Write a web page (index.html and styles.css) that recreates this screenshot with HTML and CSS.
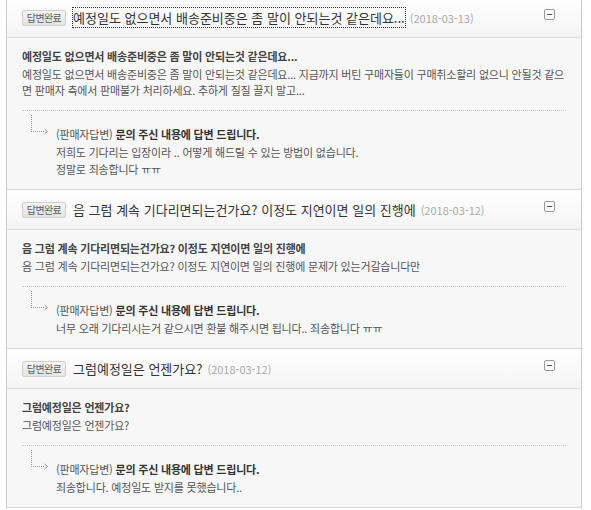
FILE: index.html
```html
<!DOCTYPE html>
<html lang="ko">
<head>
  <meta charset="UTF-8">
  <meta name="viewport" content="width=device-width, initial-scale=1.0">
  <title>상품문의</title>
  <link rel="stylesheet" href="styles.css">
</head>
<body>
  <ul class="qna-list">
    <li class="qna-item">
      <div class="qna-head">
        <span class="badge">답변완료</span>
        <span class="subject focused">예정일도 없으면서 배송준비중은 좀 말이 안되는것 같은데요...</span>
        <span class="date">(2018-03-13)</span>
        <span class="toggle"></span>
      </div>
      <div class="qna-body">
        <p class="q-title">예정일도 없으면서 배송준비중은 좀 말이 안되는것 같은데요...</p>
        <p class="q-text">예정일도 없으면서 배송준비중은 좀 말이 안되는것 같은데요... 지금까지 버틴 구매자들이 구매취소할리 없으니 안될것 같으면 판매자 측에서 판매불가 처리하세요. 추하게 질질 끌지 말고...</p>
        <div class="answer">
          <svg class="arrow" width="20" height="22" viewBox="0 0 20 22">
            <path d="M1.5 1v16.5h13" fill="none" stroke="#999" stroke-dasharray="1 1"/>
            <path d="M14.5 15l3 2.5-3 2.5" fill="none" stroke="#999"/>
          </svg>
          <div class="answer-content">
            <p class="a-title"><span class="who">(판매자답변)</span> <b>문의 주신 내용에 답변 드립니다.</b></p>
            <p class="a-text">저희도 기다리는 입장이라 .. 어떻게 해드릴 수 있는 방법이 없습니다.<br>정말로 죄송합니다 ㅠㅠ</p>
          </div>
        </div>
      </div>
    </li>
    <li class="qna-item">
      <div class="qna-head">
        <span class="badge">답변완료</span>
        <span class="subject">음 그럼 계속 기다리면되는건가요? 이정도 지연이면 일의 진행에</span>
        <span class="date">(2018-03-12)</span>
        <span class="toggle"></span>
      </div>
      <div class="qna-body">
        <p class="q-title">음 그럼 계속 기다리면되는건가요? 이정도 지연이면 일의 진행에</p>
        <p class="q-text">음 그럼 계속 기다리면되는건가요? 이정도 지연이면 일의 진행에 문제가 있는거갈습니다만</p>
        <div class="answer">
          <svg class="arrow" width="20" height="22" viewBox="0 0 20 22">
            <path d="M1.5 1v16.5h13" fill="none" stroke="#999" stroke-dasharray="1 1"/>
            <path d="M14.5 15l3 2.5-3 2.5" fill="none" stroke="#999"/>
          </svg>
          <div class="answer-content">
            <p class="a-title"><span class="who">(판매자답변)</span> <b>문의 주신 내용에 답변 드립니다.</b></p>
            <p class="a-text">너무 오래 기다리시는거 같으시면 환불 해주시면 됩니다.. 죄송합니다 ㅠㅠ</p>
          </div>
        </div>
      </div>
    </li>
    <li class="qna-item">
      <div class="qna-head">
        <span class="badge">답변완료</span>
        <span class="subject">그럼예정일은 언젠가요?</span>
        <span class="date">(2018-03-12)</span>
        <span class="toggle"></span>
      </div>
      <div class="qna-body">
        <p class="q-title">그럼예정일은 언젠가요?</p>
        <p class="q-text">그럼예정일은 언젠가요?</p>
        <div class="answer">
          <svg class="arrow" width="20" height="22" viewBox="0 0 20 22">
            <path d="M1.5 1v16.5h13" fill="none" stroke="#999" stroke-dasharray="1 1"/>
            <path d="M14.5 15l3 2.5-3 2.5" fill="none" stroke="#999"/>
          </svg>
          <div class="answer-content">
            <p class="a-title"><span class="who">(판매자답변)</span> <b>문의 주신 내용에 답변 드립니다.</b></p>
            <p class="a-text">죄송합니다. 예정일도 받지를 못했습니다..</p>
          </div>
        </div>
      </div>
    </li>
  </ul>
</body>
</html>
```

FILE: styles.css
```css
body {
  margin: 0;
  padding: 0;
  background-color: #fff;
  font-family: "Noto Sans CJK KR", "Noto Sans", sans-serif;
  color: #555;
}

p {
  margin: 0;
}

.qna-list {
  list-style: none;
  margin: -2px 9px 0 6px;
  padding: 0;
  border-left: 1px solid #ccc;
  border-right: 1px solid #ccc;
}

.qna-item {
  border-bottom: 1px solid #d6d6d6;
}

.qna-head {
  display: flex;
  align-items: center;
  height: 39px;
  padding: 0 26px 0 15px;
  background: linear-gradient(#fff, #f4f4f4);
  border-bottom: 1px solid #dcdcdc;
}

.badge {
  flex: none;
  width: 42px;
  height: 14px;
  line-height: 14px;
  text-align: center;
  font-size: 10px;
  letter-spacing: -0.6px;
  color: #5a5a5a;
  background: linear-gradient(#f4f4f4, #e4e4e4);
  border: 1px solid #cfcfcf;
  border-radius: 2px;
}

.subject {
  margin-left: 7px;
  font-size: 13px;
  letter-spacing: 0;
  color: #333;
  white-space: nowrap;
}

.focused {
  outline: 1px dotted #333;
  outline-offset: 0;
}

.date {
  margin-left: 5px;
  font-size: 11px;
  color: #aaa;
  white-space: nowrap;
}

.toggle {
  flex: none;
  position: relative;
  width: 9px;
  height: 9px;
  margin: -6px 0 0 auto;
  border: 1px solid #999;
  border-radius: 2px;
  background-color: #fff;
}

.toggle::after {
  content: "";
  position: absolute;
  left: 2px;
  top: 4px;
  width: 5px;
  height: 1px;
  background-color: #555;
}

.qna-body {
  padding: 9px 15px 11px 15px;
  background-color: #f7f7f7;
  font-size: 11px;
  letter-spacing: -0.2px;
}

.q-title {
  line-height: 18px;
  margin-bottom: 1px;
  font-weight: bold;
  color: #444;
}

.q-text {
  line-height: 16px;
  color: #555;
}

.answer {
  display: flex;
  gap: 6px;
  margin-top: 12px;
  padding: 3px 0 0 8px;
  border-top: 1px dotted #ccc;
}

.arrow {
  flex: none;
}

.answer-content {
  padding-top: 11px;
}

.a-title {
  line-height: 18px;
  margin-bottom: 1px;
  color: #555;
}

.a-title b {
  color: #333;
}

.a-text {
  line-height: 17px;
  color: #555;
}
```
